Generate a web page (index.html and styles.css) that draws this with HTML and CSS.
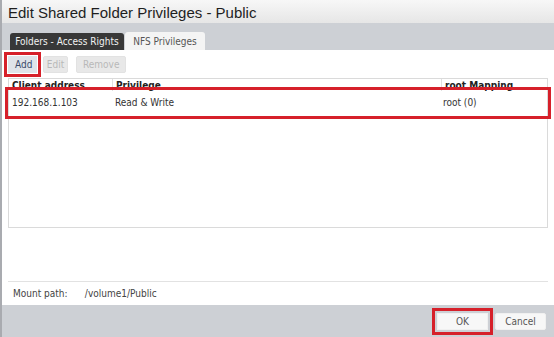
FILE: index.html
```html
<!DOCTYPE html>
<html lang="en">
<head>
  <meta charset="UTF-8" />
  <meta name="viewport" content="width=device-width, initial-scale=1.0" />
  <title>Edit Shared Folder Privileges</title>
  <link rel="stylesheet" href="styles.css">
</head>
<body>
  <div class="dialog">
    <div class="titlebar">Edit Shared Folder Privileges - Public</div>

    <div class="tabs">
      <div class="tab dark">Folders - Access Rights</div>
      <div class="tab active">NFS Privileges</div>
    </div>

    <div class="content">
      <div class="toolbar">
        <button class="btn primary marked">Add</button>
        <button class="btn disabled edit">Edit</button>
        <button class="btn disabled">Remove</button>
      </div>

      <div class="grid">
        <div class="row head">
          <div class="cell c1">Client address</div>
          <div class="cell c2">Privilege</div>
          <div class="cell c3">root Mapping</div>
        </div>
        <div class="row data marked">
          <div class="cell c1">192.168.1.103</div>
          <div class="cell c2">Read &amp; Write</div>
          <div class="cell c3">root (0)</div>
        </div>
      </div>

      <div class="mount">
        <span class="label">Mount path:</span>
        <span>/volume1/Public</span>
      </div>
    </div>

    <div class="footer">
      <button class="btn marked ok">OK</button>
      <button class="btn">Cancel</button>
    </div>
  </div>
</body>
</html>
```

FILE: styles.css
```css
body {
  margin: 0;
  padding: 0;
  background: #fff;
  font-family: "DejaVu Sans Condensed", "Liberation Sans", sans-serif;
  font-size: 10px;
  color: #333;
}
.dialog {
  width: 552px;
  height: 337px;
  display: flex;
  flex-direction: column;
  border-left: 2px solid #a9abb0;
  overflow: hidden;
}
.titlebar {
  height: 23px;
  line-height: 25px;
  padding-left: 6px;
  font-family: "Liberation Sans", Arial, sans-serif;
  font-size: 15px;
  color: #1e1e1e;
  background: linear-gradient(to bottom, #f7f7f7, #e6e6e6);
}
.tabs {
  height: 27px;
  background: #cdd0d5;
  display: flex;
  align-items: flex-end;
  padding-left: 8px;
  gap: 1px;
}
.tab {
  height: 17px;
  line-height: 17px;
  text-align: center;
  border-radius: 3px 3px 0 0;
}
.tab.dark {
  width: 114px;
  background: #383838;
  color: #f2f2f2;
}
.tab.active {
  width: 80px;
  height: 18px;
  line-height: 19px;
  background: #f4f4f4;
  color: #555;
}
.content {
  flex: 1;
  background: #fff;
  display: flex;
  flex-direction: column;
  padding: 6px 6px 0 6px;
}
.toolbar {
  display: flex;
  gap: 6px;
  height: 17px;
}
.btn {
  font-family: inherit;
  font-size: 10px;
  height: 17px;
  padding: 0 6px;
  border: 1px solid #d6d8dc;
  border-radius: 2px;
  background: #f6f6f6;
  color: #444;
}
.btn.primary {
  width: 29px;
  background: #dfe3e9;
  border-color: #dfe3e9;
  color: #3a4a6a;
}
.btn.disabled {
  background: #e8e8e8;
  border-color: #e2e2e2;
  color: #b8b8b8;
}
.btn.edit {
  width: 25px;
  margin-right: 2px;
  padding: 0;
}
.marked {
  outline: 3px solid #d6202a;
  outline-offset: 1px;
  border-radius: 0;
}
.grid {
  margin-top: 5px;
  height: 148px;
  border: 1px solid #dadada;
}
.row {
  display: flex;
}
.row.head {
  height: 12px;
  line-height: 14px;
  font-weight: bold;
  color: #222;
}
.row.head .cell {
  border-right: 1px solid #e0e0e0;
}
.row.head .c3 {
  border-right: none;
}
.row.data {
  height: 24px;
  line-height: 24px;
  color: #333;
}
.cell {
  padding-left: 3px;
  overflow: hidden;
  white-space: nowrap;
}
.c1 {
  width: 100px;
}
.c2 {
  width: 325px;
}
.c3 {
  flex: 1;
}
.mount {
  margin-top: 53px;
  border-top: 1px solid #e2e2e2;
  height: 23px;
  line-height: 24px;
  padding-left: 5px;
  color: #444;
}
.mount .label {
  display: inline-block;
  width: 69px;
}
.footer {
  height: 32px;
  background: #cdd0d5;
  display: flex;
  justify-content: flex-end;
  align-items: center;
  gap: 7px;
  padding-right: 8px;
}
.footer .btn {
  width: 51px;
  height: 17px;
  background: #f7f7f7;
  border-color: #f0f0f0;
  color: #555;
}
.footer .ok {
  outline-offset: 2px;
}
```
